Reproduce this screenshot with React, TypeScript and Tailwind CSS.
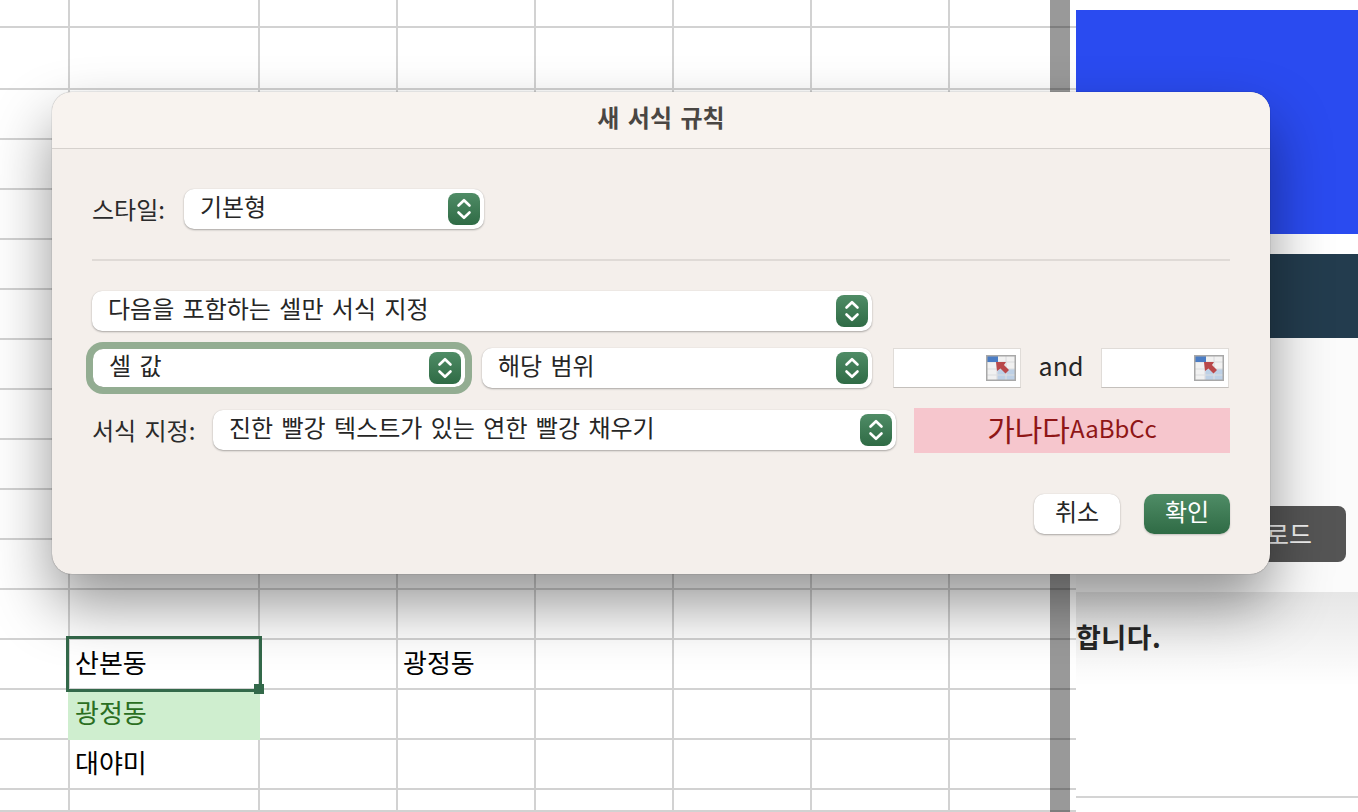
import type { ReactNode } from 'react';

const FONT = 'font-["Noto_Sans_CJK_KR","Noto_Sans",sans-serif]';

const COLUMNS = Array.from({ length: 8 }, (_, i) => i);
const ROW_HEIGHTS = [28, 62, ...Array.from({ length: 14 }, () => 50), 22];

function cellText(row: number, col: number) {
  if (row === 13 && col === 1) return '산본동';
  if (row === 13 && col === 3) return '광정동';
  if (row === 14 && col === 1) return '광정동';
  if (row === 15 && col === 1) return '대야미';
  return '';
}

function Sheet() {
  return (
    <div className="relative w-[1076px] shrink-0 overflow-hidden bg-white">
      <div className="grid grid-cols-[70px_190px_138px_138px_138px_138px_138px_138px] w-[1088px]">
        {ROW_HEIGHTS.map((height, row) =>
          COLUMNS.map((col) => {
            const text = cellText(row, col);
            const isMatch = row === 14 && col === 1;
            return (
              <div
                key={`${row}-${col}`}
                className={`flex items-center border-r-2 border-b-2 pb-[4px] text-[26px] leading-none ${
                  isMatch
                    ? '-ml-[2px] border-transparent bg-[#cfeecf] pl-[7px] text-[#2b6e22]'
                    : 'border-[#d2d2d2] pl-[5px] text-black'
                } ${height === 28 ? 'h-[28px]' : height === 62 ? 'h-[62px]' : height === 22 ? 'h-[22px]' : 'h-[50px]'}`}
              >
                {text}
              </div>
            );
          }),
        )}
      </div>

      {/* selected cell */}
      <div className="absolute left-[66px] top-[636px] h-[56px] w-[196px] border-[3px] border-[#33694a]" />
      <div className="absolute left-[254px] top-[684px] h-[10px] w-[10px] bg-[#33694a]" />
      {/* scrollbar */}
      <div className="absolute left-[1050px] top-0 h-full w-[20px] bg-black/40" />
    </div>
  );
}

function SidePanel() {
  return (
    <div className="flex min-w-0 flex-1 flex-col bg-white">
      <div className="mt-[10px] h-[224px] bg-[#2a4bf0]" />
      <div className="mt-[20px] h-[84px] bg-[#233c4e]" />
      <div className="flex h-[254px] flex-col items-end bg-[#fbfbfb] pr-[12px] pt-[168px]">
        <div className="flex h-[56px] w-[160px] items-center justify-center rounded-[8px] bg-[#555555] text-[25px] text-[#f2f2f2]">
          다운로드
        </div>
      </div>
      <div className="bg-gradient-to-b from-black/10 to-transparent pt-[26px] pb-[30px] text-[27px] leading-[38px] font-bold tracking-[0.5px] text-[#262626]">
        합니다.
      </div>
      <div className="mt-[110px] h-[2px] bg-[#d4d4d4]" />
    </div>
  );
}

function Stepper() {
  return (
    <div className="flex h-[32px] w-[32px] shrink-0 items-center justify-center rounded-[8px] bg-gradient-to-b from-[#4f8c66] to-[#2f6b45]">
      <svg width="20" height="26" viewBox="0 0 20 26" fill="none" stroke="white" strokeWidth="2.6" strokeLinecap="round" strokeLinejoin="round">
        <path d="M4.5 9.5 10 4.2l5.5 5.3" />
        <path d="M4.5 16.5 10 21.8l5.5-5.3" />
      </svg>
    </div>
  );
}

function Select({
  label,
  className,
  heightClass = 'h-[40px]',
}: {
  label: string;
  className: string;
  heightClass?: string;
}) {
  return (
    <div
      className={`flex shrink-0 items-center justify-between rounded-[10px] bg-white pl-[16px] pr-[4px] text-[24px] text-[#262626] shadow-[0_1px_2px_rgba(0,0,0,0.3),0_0_1px_rgba(0,0,0,0.15)] [word-spacing:3px] ${heightClass} ${className}`}
    >
      <span className="-mt-[7px]">{label}</span>
      <Stepper />
    </div>
  );
}

function RangeIcon() {
  return (
    <svg width="30" height="26" viewBox="0 0 30 26" className="shrink-0">
      <rect width="30" height="26" fill="#f1f1f1" />
      <rect x="11" y="14" width="19" height="12" fill="#bdd0e6" />
      <path d="M11 7v19M20 0v26M0 7h30M0 14h30M0 20h30" stroke="#dcdde0" strokeWidth="1.2" fill="none" />
      <rect width="12" height="7" fill="#4a7cc4" />
      <path d="M10 7h10l-2 3 5 5-3.500 3.500-5-5L11 16z" fill="#b9484a" />
      <rect x="0.750" y="0.750" width="28.500" height="24.500" fill="none" stroke="#a8a8a8" strokeWidth="1.500" />
    </svg>
  );
}

function RangeInput() {
  return (
    <div className="flex h-[40px] w-[128px] shrink-0 items-center justify-end border border-[#e0dcd8] border-b-[#c4c0bc] bg-white pr-[4px]">
      <RangeIcon />
    </div>
  );
}

function Label({ children }: { children: ReactNode }) {
  return <span className="whitespace-nowrap text-[24px] text-[#2b2b2b] [word-spacing:3px]">{children}</span>;
}

function RuleDialog() {
  return (
    <div className="absolute left-[52px] top-[92px] flex h-[482px] w-[1218px] flex-col overflow-hidden rounded-[20px] bg-[#f4efeb] shadow-[0_30px_60px_rgba(0,0,0,0.42),0_0_1px_rgba(0,0,0,0.6)]">
      <div className="flex h-[57px] shrink-0 items-center justify-center border-b-[1.5px] border-[#d6d1cd] bg-[#f8f3ef] pb-[6px] text-[24px] font-bold text-[#4a4643] [word-spacing:3px]">
        새 서식 규칙
      </div>

      <div className="flex flex-col px-[40px]">
        <div className="mt-[40px] flex items-center gap-[19px]">
          <Label>스타일:</Label>
          <Select label="기본형" className="w-[300px]" />
        </div>

        <div className="mt-[30px] h-[2px] bg-[#dfdad6]" />

        <Select label="다음을 포함하는 셀만 서식 지정" className="mt-[30px] w-[780px]" />

        <div className="mt-[16px] flex items-center">
          <Select
            label="셀 값"
            heightClass="h-[38px]"
            className="ml-[1px] w-[372px] pr-[3px] pl-[15px] outline-[7px] outline-[#93ad92]"
          />
          <Select label="해당 범위" className="ml-[17px] w-[390px]" />
          <div className="ml-[21px]"><RangeInput /></div>
          <span className="w-[80px] pb-[5px] text-center text-[25px] text-[#262626]">and</span>
          <RangeInput />
        </div>

        <div className="mt-[18px] flex items-center">
          <div className="w-[121px] shrink-0"><Label>서식 지정:</Label></div>
          <Select label="진한 빨강 텍스트가 있는 연한 빨강 채우기" className="w-[683px]" />
          <div className="ml-[18px] flex h-[45px] w-[316px] shrink-0 items-center justify-center bg-[#f6c6cd] pb-[4px] text-[#8f1616]">
            <span className="text-[30px] leading-none">가나다</span>
            <span className="text-[24px] leading-none">AaBbCc</span>
          </div>
        </div>

        <div className="mt-[41px] flex justify-end gap-[24px]">
          <div className="flex h-[40px] w-[86px] items-center justify-center rounded-[10px] bg-white pb-[6px] text-[24px] text-[#262626] shadow-[0_1px_2px_rgba(0,0,0,0.3),0_0_1px_rgba(0,0,0,0.15)]">
            취소
          </div>
          <div className="flex h-[40px] w-[86px] items-center justify-center rounded-[10px] bg-gradient-to-b from-[#4f8c66] to-[#2f6b45] pb-[6px] text-[24px] text-white shadow-[0_1px_2px_rgba(0,0,0,0.2)]">
            확인
          </div>
        </div>
      </div>
    </div>
  );
}

export default function App() {
  return (
    <div className={`relative flex h-[812px] w-[1358px] overflow-hidden bg-white ${FONT}`}>
      <Sheet />
      <SidePanel />
      <RuleDialog />
    </div>
  );
}
